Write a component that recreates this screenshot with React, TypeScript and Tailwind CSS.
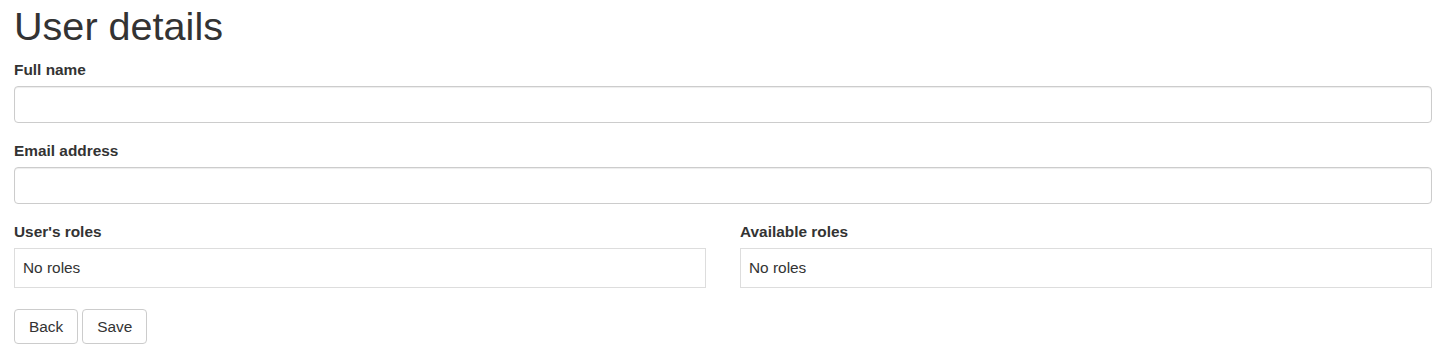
export default function App() {
  return (
    <div className="min-h-screen bg-white pl-[14px] pr-[16px] text-[#333] font-['Liberation_Sans',Arial,sans-serif] text-[15.4px] leading-[22px]">
      <h1 className="mt-[4.5px] mb-[11px] text-[39.6px] leading-[1.1] font-normal">User details</h1>

      <div className="mb-[17px]">
        <label className="block mb-[5px] font-bold">Full name</label>
        <input
          type="text"
          className="block w-full h-[37px] px-[13px] rounded-[4px] border border-[#ccc] bg-white shadow-[inset_0_1px_1px_rgba(0,0,0,0.075)] outline-none"
        />
      </div>

      <div className="mb-[17px]">
        <label className="block mb-[5px] font-bold">Email address</label>
        <input
          type="email"
          className="block w-full h-[37px] px-[13px] rounded-[4px] border border-[#ccc] bg-white shadow-[inset_0_1px_1px_rgba(0,0,0,0.075)] outline-none"
        />
      </div>

      <div className="grid grid-cols-2 gap-x-[34px]">
        <div>
          <label className="block mb-[5px] font-bold">User's roles</label>
          <div className="border border-[#ddd] pl-[8px] py-[8px]">No roles</div>
        </div>
        <div>
          <label className="block mb-[5px] font-bold">Available roles</label>
          <div className="border border-[#ddd] pl-[8px] py-[8px]">No roles</div>
        </div>
      </div>

      <div className="mt-[21px] flex gap-[4px]">
        <button className="h-[35px] px-[14px] rounded-[4px] border border-[#ccc] bg-white text-[#333]">Back</button>
        <button className="h-[35px] px-[14px] rounded-[4px] border border-[#ccc] bg-white text-[#333]">Save</button>
      </div>
    </div>
  );
}
